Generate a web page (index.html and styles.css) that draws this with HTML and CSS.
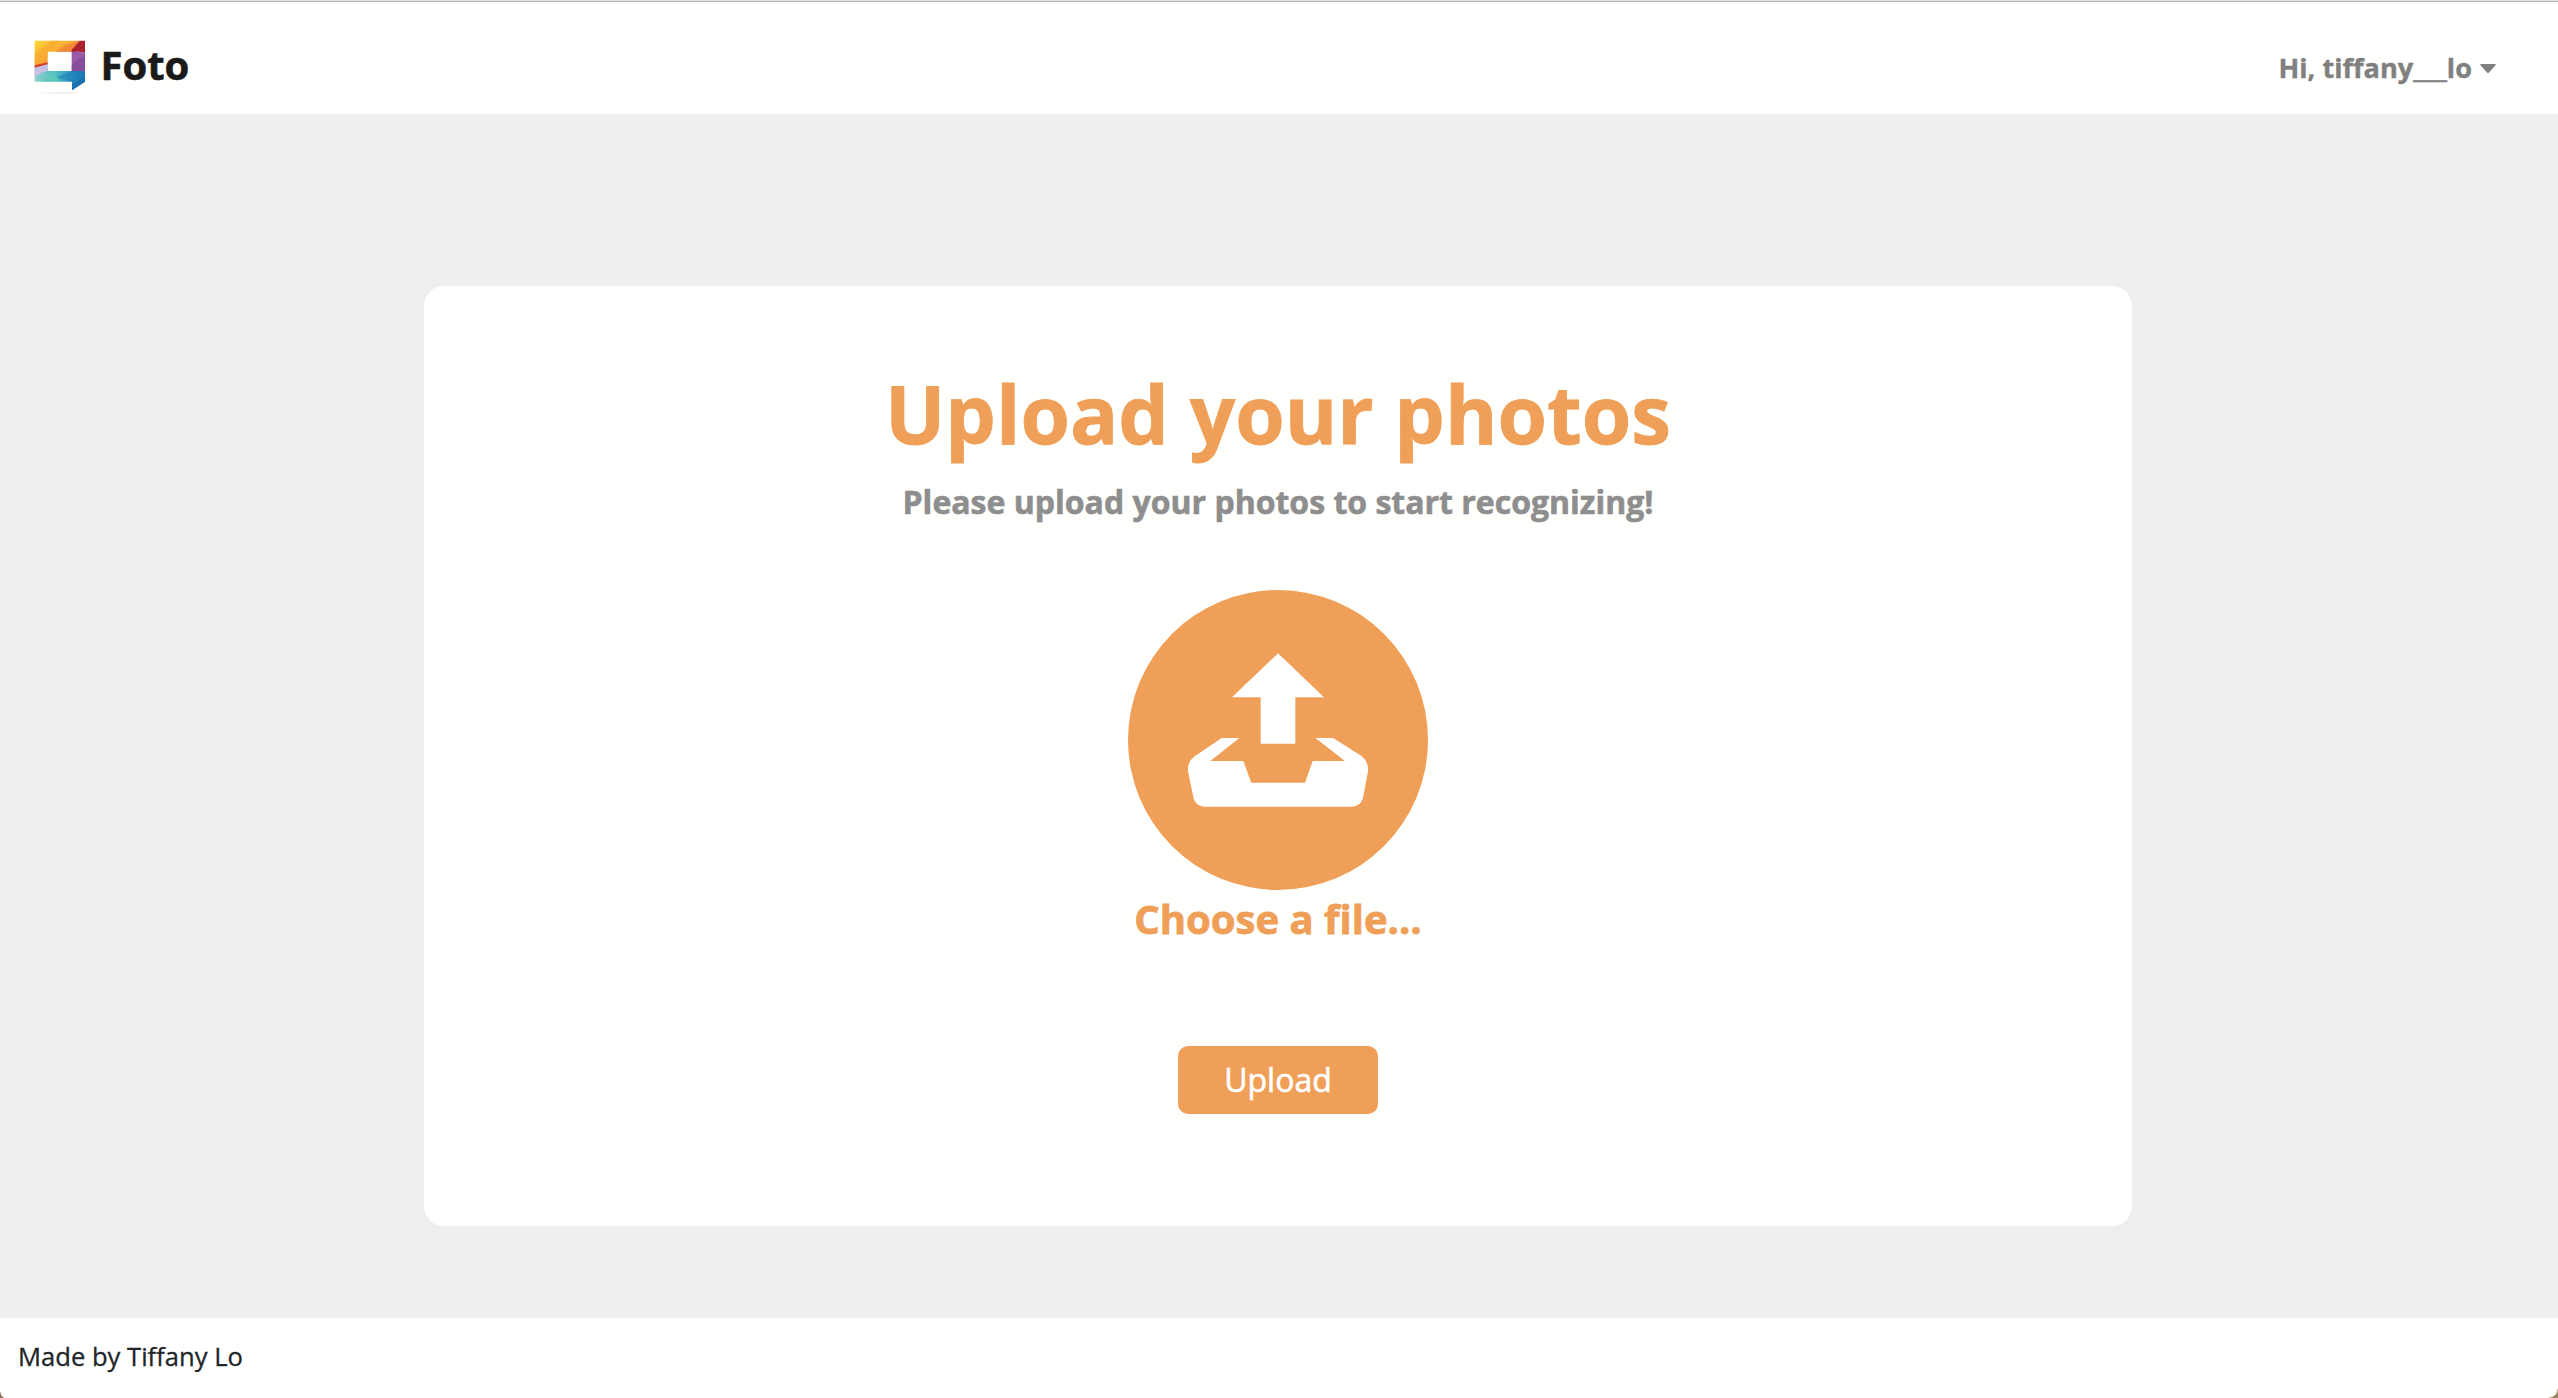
FILE: index.html
```html
<!DOCTYPE html>
<html lang="en">
<head>
<meta charset="utf-8">
<title>Foto</title>
<link rel="stylesheet" href="styles.css">
</head>
<body>
<header class="navbar">
  <a class="brand">
    <svg class="logo" viewBox="0 0 180 180" aria-hidden="true">
      <defs>
        <linearGradient id="warm" x1="0" y1="0" x2="1" y2="1"><stop offset="0" stop-color="#fdd835"/><stop offset=".5" stop-color="#f6a136"/><stop offset="1" stop-color="#e8663a"/></linearGradient>
        <linearGradient id="cool" x1="0" y1="0" x2="1" y2="0"><stop offset="0" stop-color="#8fd3cc"/><stop offset=".45" stop-color="#4cb8c4"/><stop offset="1" stop-color="#1f6cb2"/></linearGradient>
        <radialGradient id="shade"><stop offset="0" stop-color="#d4d4d4"/><stop offset="1" stop-color="#fff" stop-opacity="0"/></radialGradient>
      </defs>
      <ellipse cx="92" cy="177" rx="86" ry="4" fill="url(#shade)"/>
      <path fill="url(#warm)" d="M14 20H149L125 53H53V88L14 100Z"/>
      <path fill="#f9a82f" d="M14 62L60 20H90L53 53V70L14 94Z" opacity=".55"/>
      <path fill="#ee7a35" d="M78 53L105 34L149 20L125 53Z" opacity=".6"/>
      <path fill="#a9222d" d="M149 20H165V57Q145 50 125 56V48Z"/>
      <path fill="#d3412b" d="M14 94L53 85V92L14 103Z"/>
      <path fill="#9a5aa8" d="M125 55Q145 49 165 57V111H125Z"/>
      <path fill="#743f92" d="M125 92L165 62V111H125Z" opacity=".5"/>
      <path fill="url(#cool)" d="M14 102L53 94V111H165V143L126 169V143H14Z"/>
      <path fill="#c9c1e4" d="M14 101L53 91V111L34 116L14 130Z"/>
      <path fill="#62cdb0" d="M34 143L72 111L88 143Z" opacity=".55"/>
      <path fill="#187fbd" d="M80 130L125 111H165V143L126 169V143Z" opacity=".55"/>
      <path fill="#1b5ea3" d="M126 150L165 130V143L126 169Z" opacity=".45"/>
    </svg>
    <span class="brand-name">Foto</span>
  </a>
  <a class="user-menu">Hi, tiffany___lo<svg class="caret" viewBox="0 0 16 9" aria-hidden="true"><path d="M1 0H15Q16.400 .3 15.400 1.500L9 8.400Q8 9.400 7 8.400L.6 1.500Q-.4 .3 1 0Z"/></svg></a>
</header>
<main class="content">
  <section class="card">
    <h1 class="title">Upload your photos</h1>
    <p class="subtitle">Please upload your photos to start recognizing!</p>
    <label class="picker">
      <svg class="picker-icon" viewBox="0 0 900 900" aria-hidden="true">
        <circle cx="450" cy="450" r="450" fill="#ef9f57"/>
        <path fill="#fff" d="M450 190L588 322H502V461H398V322H312ZM281 444H334L247 513H346L370 578H531L554 513H651L562 444H615L701 498Q722 515 720 544L705 624Q697 650 672 650H229Q202 648 196 622L180 544Q178 515 198 500Z"/>
      </svg>
      <span class="picker-text">Choose a file...</span>
    </label>
    <button class="upload">Upload</button>
  </section>
</main>
<footer class="footer">Made by Tiffany Lo</footer>
</body>
</html>
```
FILE: styles.css
```css
* { box-sizing: border-box; }

body {
  margin: 0;
  height: 1398px;
  display: flex;
  flex-direction: column;
  font-family: "Open Sans", sans-serif;
  background: #eee;
  overflow: hidden;
}

.navbar {
  height: 114px;
  border-top: 1px solid #e2e2e2;
  box-shadow: inset 0 1px #b4b4b4;
  background: #fffffd;
  display: flex;
  align-items: flex-start;
  justify-content: space-between;
  padding: 33px 62px 0 30px;
}

.brand { display: flex; }

.logo { width: 60px; height: 60px; }

.brand-name {
  margin-left: 10.500px;
  font-size: 40px;
  line-height: 62px;
  font-weight: 700;
  color: #1a1a1a;
  -webkit-text-stroke: .6px;
}

.user-menu {
  display: flex;
  align-items: center;
  font-size: 27.200px;
  line-height: 68px;
  font-weight: 700;
  color: gray;
  -webkit-text-stroke: .4px;
}

.caret { width: 16px; height: 9px; margin-left: 8px; fill: gray; }

.content { flex: 1; padding-top: 172px; }

.card {
  width: 1708px;
  height: 940px;
  margin-left: 424px;
  border-radius: 20px;
  background: #fffffd;
  display: flex;
  flex-direction: column;
  align-items: center;
}

.title {
  margin: 72px 0 0;
  font-size: 80px;
  line-height: 110px;
  font-weight: 700;
  color: #ef9f57;
  -webkit-text-stroke: .8px;
}

.subtitle {
  margin: 12px 0 0;
  font-size: 32px;
  line-height: 44px;
  font-weight: 700;
  color: #8e8e8e;
  -webkit-text-stroke: .6px;
}

.picker {
  margin-top: 66px;
  display: flex;
  flex-direction: column;
  align-items: center;
}

.picker-icon { width: 300px; height: 300px; }

.picker-text {
  font-size: 40px;
  line-height: 58px;
  font-weight: 700;
  color: #ef9f57;
  -webkit-text-stroke: .8px;
}

.upload {
  width: 200px;
  height: 68px;
  margin-top: 98px;
  padding: 0;
  border: 0;
  border-radius: 10px;
  background: #ef9f57;
  color: #fff;
  font: 400 32px/68px "Open Sans", sans-serif;
  -webkit-text-stroke: .6px;
}

.footer {
  height: 80px;
  padding-left: 18px;
  background:
    radial-gradient(circle at 100% 0, transparent 6px, #8b7355 7px) 0 100% / 7px 6px no-repeat,
    radial-gradient(circle at 0 0, transparent 8px, #a08660 9px) 100% 100% / 9px 9px no-repeat,
    #fff;
  font-size: 25.600px;
  line-height: 78px;
  color: #212529;
  -webkit-text-stroke: .3px;
}
```
